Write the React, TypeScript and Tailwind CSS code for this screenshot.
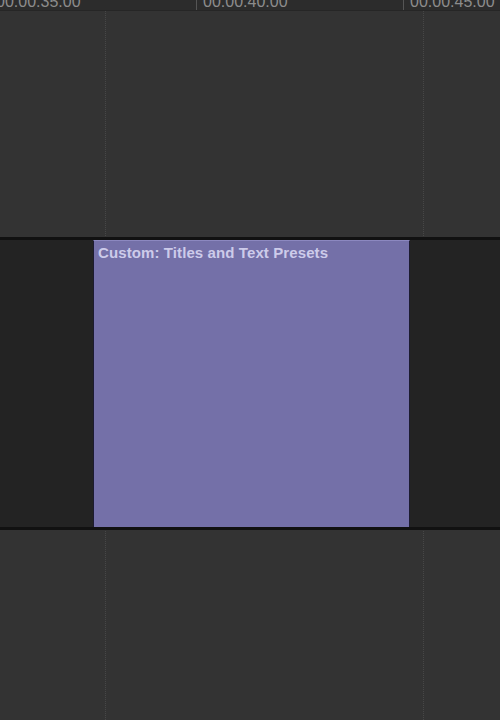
const labels = ['00:00:35:00', '00:00:40:00', '00:00:45:00'];

function Ruler() {
  return (
    <div className="h-[11px] shrink-0 overflow-hidden border-b border-[#262626] bg-[#2c2c2c]">
      <div className="-ml-[11px] flex h-full">
        {labels.map((l) => (
          <div key={l} className="flex h-full w-[207px] shrink-0 border-l border-[#555555] pl-[6px]">
            <span className="-mt-[6px] text-[16px] leading-none text-[#8c8c8c]">{l}</span>
          </div>
        ))}
      </div>
    </div>
  );
}

function Guides() {
  return (
    <>
      <div className="pointer-events-none absolute top-[11px] bottom-0 left-[105px] border-l border-dotted border-[#474747]" />
      <div className="pointer-events-none absolute top-[11px] bottom-0 left-[423px] border-l border-dotted border-[#474747]" />
    </>
  );
}

export default function App() {
  return (
    <div
      className="relative flex h-[720px] w-[500px] flex-col overflow-hidden bg-[#333333]"
      style={{ fontFamily: '"Liberation Sans", Arial, sans-serif' }}
    >
      <Ruler />
      <Guides />
      <div className="h-[226px] shrink-0" />
      <div className="relative flex h-[293px] shrink-0 border-y-[3px] border-[#111111] bg-[#232323]">
        <div className="w-[93px] shrink-0" />
        <div className="flex w-[317px] shrink-0 flex-col border-x border-[#1c1b30] border-t border-t-[#8c88c0] bg-[#7470a8] px-[4px]">
          <span className="mt-[2px] text-[15px] font-bold leading-[19px] tracking-[0.1px] text-[#cdcbea]">
            Custom: Titles and Text Presets
          </span>
        </div>
        <div className="flex-1" />
      </div>
      <div className="flex-1" />
    </div>
  );
}
